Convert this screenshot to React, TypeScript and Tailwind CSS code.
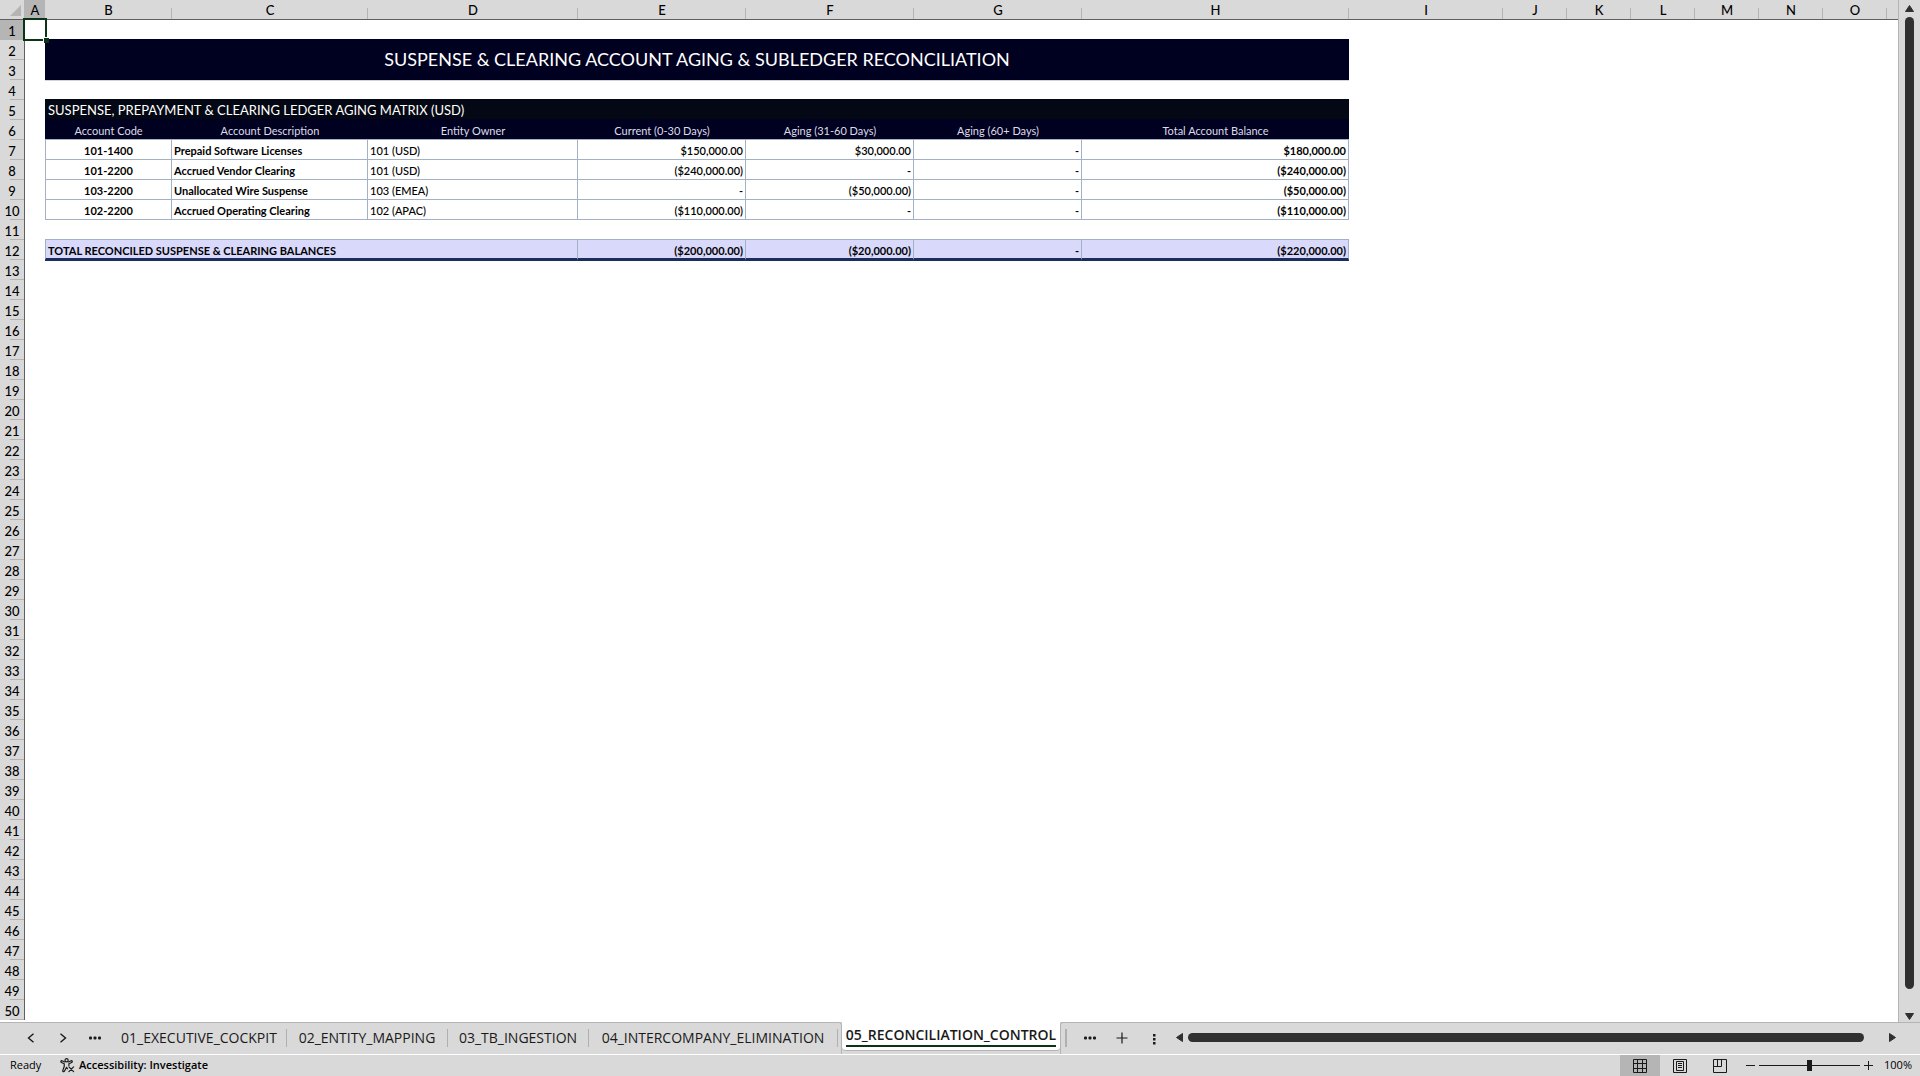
import type { ReactNode } from "react";

const COLUMNS = [
  { id: "A", width: "w-5" },
  { id: "B", width: "w-[127px]" },
  { id: "C", width: "w-[196px]" },
  { id: "D", width: "w-[210px]" },
  { id: "E", width: "w-[168px]" },
  { id: "F", width: "w-[168px]" },
  { id: "G", width: "w-[168px]" },
  { id: "H", width: "w-[267px]" },
  { id: "I", width: "w-[154px]" },
  { id: "J", width: "w-16" },
  { id: "K", width: "w-16" },
  { id: "L", width: "w-16" },
  { id: "M", width: "w-16" },
  { id: "N", width: "w-16" },
  { id: "O", width: "w-16" },
];

const HEADINGS = [
  "Account Code",
  "Account Description",
  "Entity Owner",
  "Current (0-30 Days)",
  "Aging (31-60 Days)",
  "Aging (60+ Days)",
  "Total Account Balance",
];

const ACCOUNTS = [
  { code: "101-1400", name: "Prepaid Software Licenses", entity: "101 (USD)", amounts: [150000, 30000, 0, 180000] },
  { code: "101-2200", name: "Accrued Vendor Clearing", entity: "101 (USD)", amounts: [-240000, 0, 0, -240000] },
  { code: "103-2200", name: "Unallocated Wire Suspense", entity: "103 (EMEA)", amounts: [0, -50000, 0, -50000] },
  { code: "102-2200", name: "Accrued Operating Clearing", entity: "102 (APAC)", amounts: [-110000, 0, 0, -110000] },
];

const TOTALS = [-200000, -20000, 0, -220000];

const TABS = [
  { name: "01_EXECUTIVE_COCKPIT", width: "w-[175px]" },
  { name: "02_ENTITY_MAPPING", width: "w-[161px]" },
  { name: "03_TB_INGESTION", width: "w-[141px]" },
  { name: "04_INTERCOMPANY_ELIMINATION", width: "w-[249px]" },
];

function money(value: number): string {
  if (value === 0) return "-";
  const text = "$" + Math.abs(value).toLocaleString("en-US", { minimumFractionDigits: 2 });
  return value < 0 ? `(${text})` : text;
}

const LINE = "border-[#a3b1c6]";
const CELL = "h-5 pt-[2px] leading-[17px] overflow-hidden whitespace-nowrap";
const TOTAL_CELL =
  "h-5 overflow-hidden border-r border-b-2 border-r-[#a3b1c6] border-b-[#1c2c5c] bg-[#d9d9fb] pt-[3px] leading-[15px] font-bold whitespace-nowrap";

function Blank({ span = 1 }: { span?: number }) {
  return <td colSpan={span} className="h-5" />;
}

function Row({ n, children }: { n: number; children?: ReactNode }) {
  return (
    <tr>
      <th
        scope="row"
        className={`h-5 border-r border-[#606060] bg-[linear-gradient(#b4b4b4,#b4b4b4)] bg-size-[14px_1px] bg-right-bottom bg-no-repeat pt-[2px] text-[13px] leading-[18px] font-medium ${
          n === 1 ? "bg-[#b5b5b5]" : "bg-[#d9d9d9]"
        }`}
      >
        {n}
      </th>
      {children ?? <Blank span={16} />}
    </tr>
  );
}

function Sheet() {
  return (
    <table className="w-full table-fixed border-separate border-spacing-0 text-[11px] text-black">
      <colgroup>
        <col className="w-[25px]" />
        {COLUMNS.map((c) => (
          <col key={c.id} className={c.width} />
        ))}
        <col />
      </colgroup>
      <thead>
        <tr className="bg-[#d9d9d9] text-[13px]">
          <td className="h-5 border-r border-b border-r-[#b4b4b4] border-b-[#606060] p-0">
            <svg viewBox="0 0 24 19" className="block h-[19px] w-6">
              <path d="M21 5v11H10z" fill="#b4b4b4" />
            </svg>
          </td>
          {COLUMNS.map((c) => (
            <th
              key={c.id}
              scope="col"
              className={`h-5 border-b border-[#606060] bg-[linear-gradient(#b4b4b4,#b4b4b4)] bg-size-[1px_11px] bg-right-bottom bg-no-repeat p-0 pt-[2px] leading-[17px] font-medium ${
                c.id === "A" ? "bg-[#b5b5b5]" : ""
              }`}
            >
              {c.id}
            </th>
          ))}
          <td className="border-b border-[#606060]" />
        </tr>
      </thead>
      <tbody>
        <Row n={1}>
          <td className="relative h-5 p-0">
            {/* selected cell */}
            <div className="absolute -top-[2px] -left-[2px] h-[23px] w-[24px] border-2 border-[#0b3316]" />
            <div className="absolute top-[17px] left-[18px] size-[6px] border-t border-l border-white bg-[#0b3316]" />
          </td>
          <td colSpan={7} className="h-5 border-b border-[#000020]" />
          <Blank span={8} />
        </Row>
        <Row n={2}>
          <Blank />
          <td colSpan={7} rowSpan={2} className="bg-[#000020] p-0 pb-[2px] text-center text-[18px] leading-[38px] text-white">
            SUSPENSE &amp; CLEARING ACCOUNT AGING &amp; SUBLEDGER RECONCILIATION
          </td>
          <Blank span={8} />
        </Row>
        <Row n={3}>
          <Blank />
          <Blank span={8} />
        </Row>
        <Row n={4}>
          <Blank />
          <td colSpan={7} className="h-5 border-t border-b border-t-[#d4d4d4] border-b-[#040814]" />
          <Blank span={8} />
        </Row>
        <Row n={5}>
          <Blank />
          <td colSpan={7} className={`${CELL} border-b border-[#000020] bg-[#040814] pl-[3px] text-[13px] text-white`}>
            SUSPENSE, PREPAYMENT &amp; CLEARING LEDGER AGING MATRIX (USD)
          </td>
          <Blank span={8} />
        </Row>
        <Row n={6}>
          <Blank />
          {HEADINGS.map((h) => (
            <th key={h} scope="col" className={`${CELL} border-b ${LINE} bg-[#000020] font-normal text-[#dcdce8]`}>
              {h}
            </th>
          ))}
          <Blank span={8} />
        </Row>
        {ACCOUNTS.map((a, i) => (
          <Row key={a.code} n={7 + i}>
            <Blank />
            <td className={`${CELL} border-x border-b ${LINE} text-center font-bold`}>{a.code}</td>
            <td className={`${CELL} border-r border-b ${LINE} pl-[2px] font-bold`}>{a.name}</td>
            <td className={`${CELL} border-r border-b ${LINE} pl-[2px] font-medium`}>{a.entity}</td>
            {a.amounts.map((v, j) => (
              <td
                key={j}
                className={`${CELL} border-r border-b ${LINE} pr-[2px] text-right ${j === 3 ? "font-bold" : "font-semibold"}`}
              >
                {money(v)}
              </td>
            ))}
            <Blank span={8} />
          </Row>
        ))}
        <Row n={11}>
          <Blank />
          <td colSpan={7} className={`h-5 border-b ${LINE}`} />
          <Blank span={8} />
        </Row>
        <Row n={12}>
          <Blank />
          <td colSpan={3} className={`${TOTAL_CELL} border-l border-l-[#a3b1c6] pl-[2px]`}>
            TOTAL RECONCILED SUSPENSE &amp; CLEARING BALANCES
          </td>
          {TOTALS.map((v, j) => (
            <td key={j} className={`${TOTAL_CELL} pr-[2px] text-right`}>
              {money(v)}
            </td>
          ))}
          <Blank span={8} />
        </Row>
        <Row n={13}>
          <Blank />
          <td colSpan={7} className="h-5 border-t border-[#1c2c5c]" />
          <Blank span={8} />
        </Row>
        {Array.from({ length: 37 }, (_, i) => (
          <Row key={i} n={14 + i} />
        ))}
      </tbody>
    </table>
  );
}

function VerticalScroll() {
  return (
    <div className="flex w-[21px] shrink-0 flex-col items-center bg-[#d9d9d9] pt-[5px] pb-[2px]">
      <button aria-label="Scroll up">
        <svg viewBox="0 0 9 7" className="block h-[7px] w-[9px]">
          <path d="M4.5 0.5L8.5 6.5H0.5z" fill="#303030" stroke="#303030" strokeLinejoin="round" />
        </svg>
      </button>
      <div className="mt-[5px] mb-6 w-[9px] flex-1 rounded-full bg-[#303030]" />
      <button aria-label="Scroll down">
        <svg viewBox="0 0 9 7" className="block h-[7px] w-[9px]">
          <path d="M4.5 6.5L8.5 0.5H0.5z" fill="#303030" stroke="#303030" strokeLinejoin="round" />
        </svg>
      </button>
    </div>
  );
}

function Dots() {
  return (
    <svg viewBox="0 0 12 4" className="block h-1 w-3" fill="#1a1a1a">
      <rect x="0" y="0.5" width="3" height="3" rx="1" />
      <rect x="4.5" y="0.5" width="3" height="3" rx="1" />
      <rect x="9" y="0.5" width="3" height="3" rx="1" />
    </svg>
  );
}

function TabBar() {
  return (
    <div className="flex h-8 bg-[#d9d9d9] text-[14px] text-[#1a1a1a]">
      <div className="flex shrink-0 items-center rounded-tr-[3px] border-t border-r border-[#b4b4b4] pr-[3px] pb-[2px]">
        <div className="flex w-[112px] shrink-0 items-center pl-[27px]">
          <button aria-label="Previous sheet" className="w-8">
            <svg viewBox="0 0 8 10" className="block h-[10px] w-2" fill="none" stroke="#1a1a1a" strokeWidth="1.4">
              <path d="M6.5 0.7L1.5 5l5 4.3" />
            </svg>
          </button>
          <button aria-label="Next sheet" className="w-[30px]">
            <svg viewBox="0 0 8 10" className="block h-[10px] w-2" fill="none" stroke="#1a1a1a" strokeWidth="1.4">
              <path d="M1.5 0.7l5 4.3-5 4.3" />
            </svg>
          </button>
          <button aria-label="More sheets">
            <Dots />
          </button>
        </div>
        {TABS.map((t) => (
          <button key={t.name} className={`h-[18px] shrink-0 border-r border-[#b0b0b0] leading-[18px] whitespace-nowrap ${t.width}`}>
            {t.name}
          </button>
        ))}
      </div>
      <button className="flex h-[29px] w-[218px] shrink-0 justify-center rounded-b-[4px] border-b border-[#b4b4b4] bg-white pt-[4px] font-semibold">
        <span className="h-[21px] border-b-2 border-[#0b3316] leading-[18px]">05_RECONCILIATION_CONTROL</span>
      </button>
      <div className="flex min-w-0 flex-1 items-center rounded-tl-[3px] border-t border-l border-[#b4b4b4] pb-[2px] pl-[4px]">
        <div className="h-[18px] w-[19px] shrink-0 border-l-2 border-[#b0b0b0]" />
        <button aria-label="All sheets" className="w-8 shrink-0">
          <Dots />
        </button>
        <button aria-label="New sheet" className="w-[37px] shrink-0">
          <svg viewBox="0 0 12 12" className="block size-3" stroke="#1a1a1a" strokeWidth="1.2">
            <path d="M6 0.5v11M0.5 6h11" />
          </svg>
        </button>
        <svg viewBox="0 0 3 11" className="mt-[3px] mr-5 block h-[11px] w-[3px] shrink-0" fill="#1a1a1a">
          <rect width="2.5" height="2.5" />
          <rect y="4" width="2.5" height="2.5" />
          <rect y="8" width="2.5" height="2.5" />
        </svg>
        <button aria-label="Scroll left" className="shrink-0">
          <svg viewBox="0 0 7 9" className="block h-[9px] w-[7px]">
            <path d="M0.5 4.5L6.5 0.5v8z" fill="#303030" stroke="#303030" strokeLinejoin="round" />
          </svg>
        </button>
        <div className="mr-[25px] ml-[5px] h-[9px] flex-1 rounded-full bg-[#303030]" />
        <button aria-label="Scroll right" className="mr-6 shrink-0">
          <svg viewBox="0 0 7 9" className="block h-[9px] w-[7px]">
            <path d="M6.5 4.5L0.5 0.5v8z" fill="#303030" stroke="#303030" strokeLinejoin="round" />
          </svg>
        </button>
      </div>
    </div>
  );
}

function StatusBar() {
  return (
    <div className="flex h-[22px] items-center border-t border-white bg-[#d9d9d9] text-[11px] font-medium text-black">
      <span className="w-[60px] pl-[10px]">Ready</span>
      <button className="flex items-center gap-[4px] font-semibold">
        <svg
          viewBox="0 0 16 16"
          className="block size-[15px]"
          fill="none"
          stroke="#1a1a1a"
          strokeWidth="1.3"
          strokeLinecap="round"
          strokeLinejoin="round"
        >
          <circle cx="7" cy="2.4" r="1.7" />
          <path d="M5 4.2L2.2 3C1 2.6 .4 4.2 1.6 4.8L4.5 6.2V9L3 13.2c-.4 1.3 1.2 1.9 1.8.7L7 10l1 1.5M9 4.2l2.8-1.2c1.2-.4 1.8 1.2.6 1.8L9.5 6.2V8" />
          <path d="M9.5 9.5l5 5M14.5 9.5l-5 5" />
        </svg>
        Accessibility: Investigate
      </button>
      <div className="flex-1" />
      <button aria-label="Normal view" className="flex h-full w-10 items-center justify-center bg-[#b5b5b5]">
        <svg viewBox="0 0 14 14" className="block size-[14px]" fill="none" stroke="#1a1a1a">
          <path d="M.5 .5h13v13H.5zM4.5 .5v13M9.5 .5v13M.5 4.5h13M.5 9.5h13" />
        </svg>
      </button>
      <button aria-label="Page layout view" className="flex h-full w-10 items-center justify-center">
        <svg viewBox="0 0 14 14" className="block size-[14px]" fill="none" stroke="#1a1a1a">
          <path d="M.5 .5h13v13H.5zM3.5 2.5h7v9h-7zM5 4.5h4M5 6.5h4M5 8.5h4" />
        </svg>
      </button>
      <button aria-label="Page break preview" className="flex h-full w-10 items-center justify-center">
        <svg viewBox="0 0 14 14" className="block size-[14px]" fill="none" stroke="#1a1a1a">
          <path d="M.5 .5h13v13H.5zM.5 7.5h8v-7M4.5 .5v7" />
        </svg>
      </button>
      <button aria-label="Zoom out" className="ml-[6px]">
        <svg viewBox="0 0 9 9" className="block size-[9px]" stroke="#1a1a1a">
          <path d="M0 4.5h9" />
        </svg>
      </button>
      <input
        type="range"
        aria-label="Zoom"
        min={0}
        max={200}
        defaultValue={100}
        className="mx-1 h-3 w-[101px] appearance-none bg-[linear-gradient(#1a1a1a,#1a1a1a)] bg-size-[100%_1px] bg-center bg-no-repeat [&::-webkit-slider-thumb]:h-[11px] [&::-webkit-slider-thumb]:w-[5px] [&::-webkit-slider-thumb]:appearance-none [&::-webkit-slider-thumb]:bg-[#1a1a1a]"
      />
      <button aria-label="Zoom in">
        <svg viewBox="0 0 9 9" className="block size-[9px]" stroke="#1a1a1a">
          <path d="M0 4.5h9M4.5 0v9" />
        </svg>
      </button>
      <button className="w-[47px] pr-[8px] text-right">100%</button>
    </div>
  );
}

export default function App() {
  return (
    <div className="flex h-screen flex-col overflow-hidden bg-white">
      <div className="flex min-h-0 flex-1 font-['Lato',sans-serif]">
        <div className="min-w-0 flex-1 overflow-hidden border-r border-[#b4b4b4]">
          <Sheet />
        </div>
        <VerticalScroll />
      </div>
      <div className="shrink-0 font-['Open_Sans',sans-serif]">
        <TabBar />
        <StatusBar />
      </div>
    </div>
  );
}
